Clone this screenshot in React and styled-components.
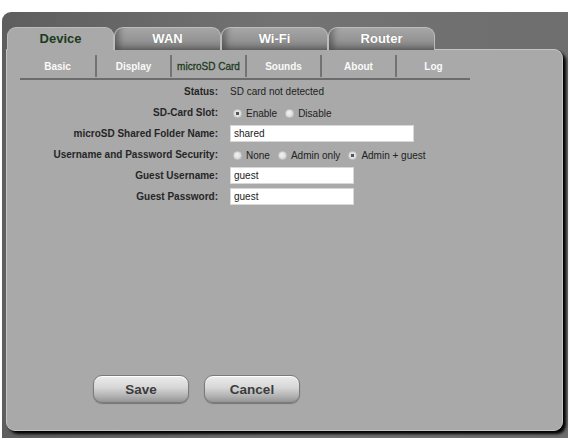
import React from "react";
import styled, { createGlobalStyle } from "styled-components";

const GlobalStyle = createGlobalStyle`
	html, body {
		margin: 0;
		padding: 0;
		background: #fff;
		font-family: "Liberation Sans", Arial, sans-serif;
	}
`;

const mainTabs = ["Device", "WAN", "Wi-Fi", "Router"];
const subTabs = ["Basic", "Display", "microSD Card", "Sounds", "About", "Log"];

function Radio({ checked, label }) {
	return (
		<RadioItem>
			<RadioDot checked={checked} />
			<span>{label}</span>
		</RadioItem>
	);
}

function App() {
	return (
		<>
			<GlobalStyle />
			<Frame>
				<TabBar>
					{mainTabs.map((t, i) => (
						<MainTab key={t} active={i === 0}>
							{t}
						</MainTab>
					))}
				</TabBar>
				<Panel>
					<SubTabBar>
						{subTabs.map((t, i) => (
							<SubTab key={t} active={i === 2} first={i === 0}>
								{t}
							</SubTab>
						))}
					</SubTabBar>
					<Form>
						<Label>Status:</Label>
						<Value>SD card not detected</Value>

						<Label>SD-Card Slot:</Label>
						<Value>
							<Radio checked label="Enable" />
							<Radio label="Disable" />
						</Value>

						<Label>microSD Shared Folder Name:</Label>
						<Value>
							<TextInput width={184} defaultValue="shared" />
						</Value>

						<Label>Username and Password Security:</Label>
						<Value>
							<Radio label="None" />
							<Radio label="Admin only" />
							<Radio checked label="Admin + guest" />
						</Value>

						<Label>Guest Username:</Label>
						<Value>
							<TextInput width={124} defaultValue="guest" />
						</Value>

						<Label>Guest Password:</Label>
						<Value>
							<TextInput width={124} defaultValue="guest" />
						</Value>
					</Form>
					<ButtonRow>
						<Button>Save</Button>
						<Button>Cancel</Button>
					</ButtonRow>
				</Panel>
			</Frame>
		</>
	);
}

export default App;

const Frame = styled.div`
	margin: 12px 3px 0 2px;
	height: 426px;
	box-sizing: border-box;
	padding: 15px 5px 0 4px;
	border-radius: 9px 0 0 0;
	background: linear-gradient(to right, #5e5e5e, #737373 50%, #6e6e6e);
`;

const TabBar = styled.div`
	display: flex;
	height: 23px;
	padding-left: 1px;
`;

const MainTab = styled.div`
	width: 107px;
	box-sizing: border-box;
	display: flex;
	align-items: center;
	justify-content: center;
	padding-bottom: 2px;
	font-size: 13px;
	font-weight: bold;
	border-radius: 9px 9px 0 0;
	border: 1px solid #bcbcbc;
	border-bottom: none;
	color: ${({ active }) => (active ? "#1c3a1c" : "#fff")};
	background: ${({ active }) =>
		active
			? "#a9a9a9"
			: "linear-gradient(to bottom, #a6a6a6, #949494 55%, #7a7a7a)"};
	box-shadow: ${({ active }) =>
		active ? "none" : "inset 7px -4px 6px -3px rgba(0, 0, 0, 0.35)"};
	position: relative;
	z-index: ${({ active }) => (active ? 2 : 1)};
	text-shadow: ${({ active }) =>
		active ? "none" : "0 0 1px rgba(0, 0, 0, 0.25)"};
`;

const Panel = styled.div`
	height: 382px;
	box-sizing: border-box;
	display: flex;
	flex-direction: column;
	background: #a9a9a9;
	border: 1px solid #c4c4c4;
	border-radius: 0 9px 9px 9px;
	box-shadow: 3px 3px 3px #000;
	margin-top: -1px;
	padding: 5px 0 27px;
`;

const SubTabBar = styled.div`
	display: flex;
	margin-left: 13px;
	width: 450px;
	height: 23px;
	border-bottom: 2px solid #6c6c6c;
`;

const SubTab = styled.div`
	width: 75px;
	display: flex;
	align-items: center;
	justify-content: center;
	white-space: nowrap;
	font-size: 10px;
	font-weight: ${({ active }) => (active ? "normal" : "bold")};
	-webkit-text-stroke: ${({ active }) => (active ? "0.3px #1d3b1d" : "0")};
	color: ${({ active }) => (active ? "#1d3b1d" : "#fafafa")};
	border-left: ${({ first }) => (first ? "none" : "2px solid #737373")};
	box-sizing: border-box;
	margin: 0 0 1px;
`;

const Form = styled.div`
	display: grid;
	grid-template-columns: 211px 1fr;
	grid-auto-rows: 21px;
	column-gap: 12px;
	margin-top: 1px;
	font-size: 10px;
	color: #222;
`;

const Label = styled.div`
	display: flex;
	align-items: center;
	justify-content: flex-end;
	font-weight: bold;
	color: #262626;
`;

const Value = styled.div`
	display: flex;
	align-items: center;
	gap: 5px;
`;

const RadioItem = styled.label`
	display: flex;
	align-items: center;
	gap: 4px;
	margin-top: 2px;
	padding-left: 3px;
	font-size: 10px;
`;

const RadioDot = styled.span`
	width: 9px;
	height: 9px;
	border-radius: 50%;
	box-sizing: border-box;
	background: ${({ checked }) =>
		checked
			? "radial-gradient(circle, #555 0 1.5px, #e2e2e2 2px)"
			: "radial-gradient(circle at 40% 40%, #f2f2f2, #d2d2d2)"};
	border: 1px solid #c6c6c6;
`;

const TextInput = styled.input.attrs({ type: "text" })`
	width: ${({ width }) => width}px;
	height: 17px;
	box-sizing: border-box;
	border: 1px solid #d8d8d8;
	background: #fff;
	padding: 0 3px;
	font-family: "Liberation Sans", Arial, sans-serif;
	font-size: 10px;
	color: #222;
	outline: none;
`;

const ButtonRow = styled.div`
	display: flex;
	gap: 15px;
	margin-top: auto;
	padding-left: 86px;
`;

const Button = styled.button`
	width: 96px;
	height: 28px;
	border-radius: 9px;
	border: 1px solid #7a7a7a;
	background: linear-gradient(to bottom, #ececec, #d6d6d6 45%, #b4b4b4 75%, #959595);
	box-shadow: inset 0 1px 0 #fff, 0 1px 1px rgba(0, 0, 0, 0.3);
	font-family: "Liberation Sans", Arial, sans-serif;
	font-size: 13.5px;
	font-weight: bold;
	color: #3c3c3c;
	cursor: pointer;
`;
